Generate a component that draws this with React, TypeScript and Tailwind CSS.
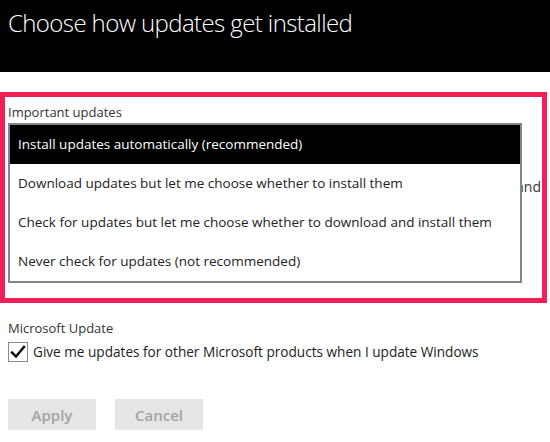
import React from "react";

const font = { fontFamily: '"Open Sans", "Noto Sans", sans-serif' };

export default function App() {
  const items = [
    "Install updates automatically (recommended)",
    "Download updates but let me choose whether to install them",
    "Check for updates but let me choose whether to download and install them",
    "Never check for updates (not recommended)",
  ];
  return (
    <div className="w-[550px] h-[442px] bg-white overflow-hidden text-[#222]" style={font}>
      <div className="h-[72px] bg-black pl-[8px] pt-[6px]">
        <h1 className="text-[24px] font-light text-white leading-[34px] tracking-[-0.6px]">
          Choose how updates get installed
        </h1>
      </div>
      <div className="mt-[20px] w-[547px] h-[211px] border-[5px] border-[#f01f57] relative">
        <div className="pl-[3px] pt-[6px] text-[13px] leading-[18px] text-[#333]">Important updates</div>
        <div className="flex justify-end pr-[1px] mt-[55px] text-[14px] text-[#333]">and</div>
        <div className="absolute left-[3px] top-[26px] w-[514px] h-[160px] border-2 border-[#858585] bg-white flex flex-col">
          {items.map((t, i) => (
            <div
              key={t}
              className={`h-[39px] flex items-center pl-[8px] text-[13.5px] whitespace-nowrap ${
                i === 0 ? "bg-black text-white" : "text-[#222]"
              }`}
            >
              {t}
            </div>
          ))}
        </div>
      </div>
      <div className="pl-[8px] pt-[16px] text-[13px] leading-[18px] text-[#333]">Microsoft Update</div>
      <div className="flex items-center pl-[8px] mt-[5px] gap-[5px]">
        <div className="w-[20px] h-[20px] border border-[#8a8a8a] bg-white flex items-center justify-center">
          <svg width="16" height="16" viewBox="0 0 16 16">
            <path d="M2 8.5 L6 12.5 L14 3" fill="none" stroke="#000" strokeWidth="2.4" strokeLinecap="square" />
          </svg>
        </div>
        <span className="text-[13.6px] text-[#222] whitespace-nowrap">
          Give me updates for other Microsoft products when I update Windows
        </span>
      </div>
      <div className="flex pl-[8px] mt-[37px] gap-[19px]">
        <button className="w-[88px] h-[31px] bg-[#e5e5e5] text-[#a3a3a3] text-[15px] font-semibold">Apply</button>
        <button className="w-[88px] h-[31px] bg-[#e5e5e5] text-[#a3a3a3] text-[15px] font-semibold">Cancel</button>
      </div>
    </div>
  );
}
